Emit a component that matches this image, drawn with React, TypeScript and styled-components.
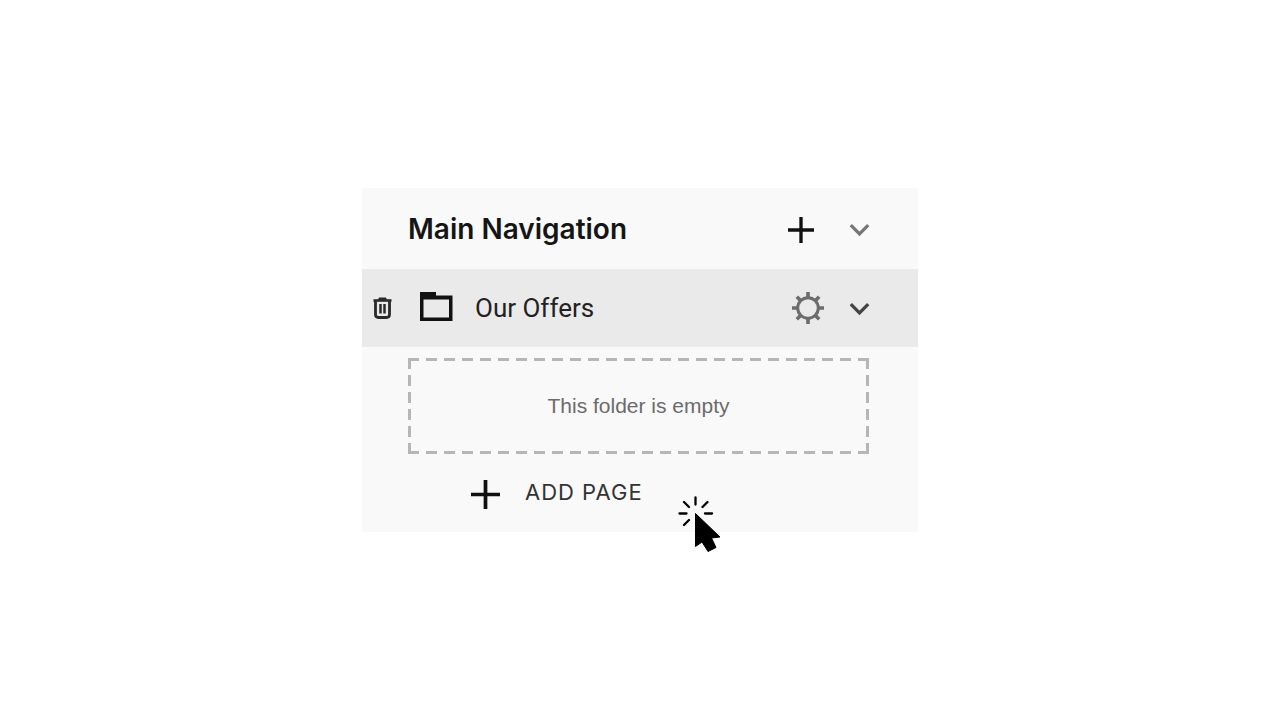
import React from "react";
import styled, { createGlobalStyle } from "styled-components";

const GlobalStyle = createGlobalStyle`
  *, *::before, *::after { box-sizing: border-box; }
  body { margin: 0; background: #fff; }
`;

const Page = styled.main`
  min-height: 100vh;
  display: flex;
  align-items: center;
  justify-content: center;
  font-family: Inter, "Liberation Sans", sans-serif;
`;

const Panel = styled.nav`
  position: relative;
  width: 100%;
  max-width: 556px;
  padding-bottom: 16px;
  background: #f9f9f9;
`;

const Row = styled.div<{ $active?: boolean }>`
  display: flex;
  align-items: center;
  padding: ${(p) => (p.$active ? "0 48px 0 10px" : "0 48px 0 46px")};
  height: ${(p) => (p.$active ? "78px" : "81px")};
  background: ${(p) => (p.$active ? "#eaeaea" : "transparent")};
`;

const IconButton = styled.button<{ $tone?: string }>`
  display: flex;
  padding: 0;
  border: 0;
  background: none;
  color: ${(p) => p.$tone ?? "#111"};
  cursor: pointer;
`;

const Actions = styled.div<{ $gap: number }>`
  display: flex;
  align-items: center;
  gap: ${(p) => p.$gap}px;
  margin-left: auto;
  padding-top: 2px;
`;

const Title = styled.h2`
  margin: 0;
  font-size: 28px;
  font-weight: 600;
  line-height: 32px;
  color: #151515;
`;

const PageLink = styled.a`
  display: flex;
  align-items: center;
  gap: 22px;
  margin-left: 27px;
  font-family: Roboto, "Liberation Sans", sans-serif;
  font-size: 26px;
  line-height: 32px;
  color: #222;
  text-decoration: none;
`;

const EmptyFolder = styled.p`
  --dash: #b6b6b6 0 11px, transparent 11px;
  display: flex;
  align-items: center;
  justify-content: center;
  height: 96px;
  margin: 11px 49px 0 46px;
  font-family: "Liberation Sans", sans-serif;
  font-size: 21px;
  line-height: 24px;
  color: #6b6b6b;
  background:
    repeating-linear-gradient(90deg, var(--dash) 18px) top / 100% 3px no-repeat,
    repeating-linear-gradient(90deg, var(--dash) 18px) bottom / 100% 3px no-repeat,
    repeating-linear-gradient(180deg, var(--dash) 17px) left / 3px 100% no-repeat,
    repeating-linear-gradient(180deg, var(--dash) 17px) right / 3px 100% no-repeat;
`;

const AddPage = styled.button`
  display: flex;
  align-items: flex-end;
  gap: 25px;
  margin: 22px 0 0 109px;
  padding: 0 0 7px;
  border: 0;
  background: none;
  font-family: Inter, "Liberation Sans", sans-serif;
  font-size: 22px;
  line-height: 33px;
  letter-spacing: 1px;
  color: #333;
  cursor: pointer;
`;

const ClickPointer = styled.svg`
  position: absolute;
  left: 316px;
  bottom: -21px;
  pointer-events: none;
`;

const Plus = ({ size }: { size: number }) => (
  <svg width={size} height={size} viewBox="0 0 28 28" fill="none" stroke="#111" strokeWidth="3.6" aria-hidden="true">
    <path d="M14 0v28M0 14h28" />
  </svg>
);

const Chevron = () => (
  <svg width="21" height="14" viewBox="0 0 21 14" fill="none" stroke="currentColor" strokeWidth="3.3" aria-hidden="true">
    <path d="M1.800 2.200l8.700 8.700 8.700-8.700" />
  </svg>
);

const Trash = () => (
  <svg width="21" height="24" viewBox="0 0 21 24" fill="none" stroke="#2a2a2a" aria-hidden="true">
    <path d="M1.500 4.500h18" strokeWidth="2.600" />
    <path d="M7 2h7v2h-7z" fill="#2a2a2a" strokeWidth="1" />
    <path d="M3.500 5v13.500q0 3 3 3h8q3 0 3-3V5" strokeWidth="2.800" />
    <path d="M8.500 8v9.500M12.500 8v9.500" strokeWidth="2.500" />
  </svg>
);

const Folder = () => (
  <svg width="33" height="32" viewBox="0 0 33 32" aria-hidden="true">
    <path fill="#111" fillRule="evenodd" d="M0 0h16v3.500h16.500V29H0zM3.500 7.500v18H29v-18z" />
  </svg>
);

const Gear = () => (
  <svg width="32" height="34" viewBox="0 0 32 34" fill="none" stroke="currentColor" aria-hidden="true">
    <circle cx="16" cy="16" r="10.300" strokeWidth="3" />
    <path
      strokeWidth="3.600"
      d="M16 0v6M16 26v6M0 16h6M26 16h6M4.800 4.800l4 4M23.200 23.200l4 4M27.200 4.800l-4 4M8.800 23.200l-4 4"
    />
  </svg>
);

export default function App() {
  return (
    <>
      <GlobalStyle />
      <Page>
        <Panel aria-label="Main Navigation">
          <Row>
            <Title>Main Navigation</Title>
            <Actions $gap={35}>
              <IconButton aria-label="Add to navigation"><Plus size={26} /></IconButton>
              <IconButton aria-label="Collapse navigation" $tone="#777"><Chevron /></IconButton>
            </Actions>
          </Row>
          <Row $active>
            <IconButton aria-label="Delete folder"><Trash /></IconButton>
            <PageLink href="#our-offers"><Folder />Our Offers</PageLink>
            <Actions $gap={25}>
              <IconButton aria-label="Folder settings" $tone="#6c6c6c"><Gear /></IconButton>
              <IconButton aria-label="Collapse folder" $tone="#444"><Chevron /></IconButton>
            </Actions>
          </Row>
          <EmptyFolder>This folder is empty</EmptyFolder>
          <AddPage><Plus size={29} />ADD PAGE</AddPage>
          <ClickPointer width="44" height="58" viewBox="0 0 44 58" aria-hidden="true">
            <path
              d="M17.500 2.500v7M6 7l5 5M29.500 7l-5 5M1.500 18.500h7M27 18.500h7M6 30l5-5"
              fill="none" stroke="#000" strokeWidth="2.300" strokeLinecap="round"
            />
            <path d="M17.500 18.500v33l6.500-4.500 6 9.500 8-4-4.500-9.500 8.500-1z" stroke="#000" strokeLinejoin="round" />
          </ClickPointer>
        </Panel>
      </Page>
    </>
  );
}
